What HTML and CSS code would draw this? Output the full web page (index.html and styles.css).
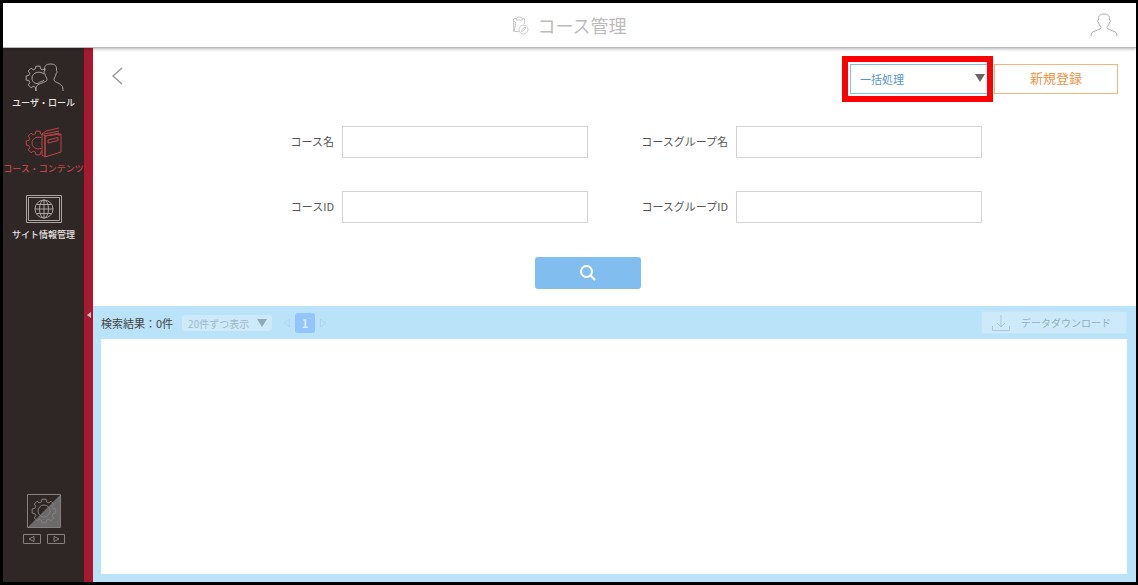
FILE: index.html
```html
<!DOCTYPE html>
<html lang="ja">
<head>
    <meta charset="UTF-8">
    <meta name="viewport" content="width=device-width, initial-scale=1.0">
    <title>コース管理</title>
    <link rel="stylesheet" href="styles.css">
</head>
<body>
    <header class="header">
        <h1 class="title">
            <svg class="title-icon" width="17" height="19" viewBox="0 0 17 19">
                <path d="M5 2.500H1.500V15.500H7M10 2.500h2.500V8M4.500 4V2.500L6 1h3l1.500 1.500V4z"/>
                <path d="M2 5v10l2-8z"/>
                <circle cx="11.500" cy="13.500" r="4.500"/>
                <path d="M9.500 15.500l.5-2 3-2.500 1 1-3 3z"/>
            </svg>
            コース管理
        </h1>
        <button type="button" class="user-button" aria-label="ユーザ">
            <svg width="28" height="24" viewBox="0 0 28 24">
                <path d="M1 23c0-3 1-4 4-5 4-1.500 6-2 6-3.500 0-1.500-2-2.500-2.500-5C7 9 7.500 7 8.500 7 8 3 10 1 14 1s6 2 5.500 6c1 0 1.500 2 0 2.500-.5 2.500-2.500 3.500-2.500 5 0 1.500 2 2 6 3.500 3 1 4 2 4 5"/>
            </svg>
        </button>
    </header>

    <div class="layout">
        <aside class="sidebar">
            <nav class="menu">
                <a href="#" class="menu-item">
                    <svg width="40" height="34" viewBox="0 0 40 34">
                        <g transform="translate(14 18)">
                            <path d="M6.900-6.900L6.900-9.800 4.800-8.200 2.500-9.200 2.100-11.800-2.100-11.800-2.500-9.200-4.800-8.200-6.900-9.800-9.800-6.900-8.200-4.800-9.200-2.500-11.800-2.100-11.800 2.100-9.200 2.500-8.200 4.800-9.800 6.900-6.900 9.800-4.800 8.200-2.500 9.200-2.100 13"/>
                            <path d="M6-4C1-8-6-5-6 0c0 4 3 6 6 5.500C2 3 5 4 6 2"/>
                        </g>
                        <path d="M12 31c0-6 1-6 6-8 2-1 5-1.500 5-3.500 0-2-2-3-2-6-1 0-1.500-2-.5-3C20 6 22 4 26.500 4s6.500 2 6 6.500c1 1 .5 3-.5 3 0 3-2 4-2 6 0 2 2 2.500 4 3.500 4 2 5 3 5 8"/>
                    </svg>
                    <span>ユーザ・ロール</span>
                </a>
                <a href="#" class="menu-item active">
                    <svg width="40" height="34" viewBox="0 0 40 34">
                        <g transform="translate(14 17)">
                            <path d="M4-8.500L2.500-9.200 2.100-11.800-2.100-11.800-2.500-9.200-4.800-8.200-6.900-9.800-9.800-6.900-8.200-4.800-9.200-2.500-11.800-2.100-11.800 2.100-9.200 2.500-8.200 4.800-9.800 6.900-6.900 9.800-4.800 8.200-2.500 9.200-2.100 11.800 2.100 11.800 2.500 9.200 4 8.500"/>
                            <path d="M3-5.500C-2-7-6-4-6 0s4 7 9 5.500"/>
                        </g>
                        <path d="M18 8l3 2v21l-3-2zM21 10l16-2v18l-16 5zM18 8l4-3 13-3M20 8l15-3M21 10l14-3v3M24 14l10-2.500v3L24 17z"/>
                    </svg>
                    <span>コース・コンテンツ</span>
                </a>
                <a href="#" class="menu-item">
                    <svg width="40" height="34" viewBox="0 0 40 34">
                        <path d="M2.500 3.500h35v27h-35zM4.500 5.500h31v23h-31z"/>
                        <circle cx="20" cy="17" r="9"/>
                        <ellipse cx="20" cy="17" rx="4.500" ry="9"/>
                        <path d="M20 8v18M11 17h18M13 12.500h14M13 21.500h14"/>
                    </svg>
                    <span>サイト情報管理</span>
                </a>
            </nav>

            <div class="settings">
                <button type="button" class="icon-button" aria-label="設定">
                    <svg width="34" height="34" viewBox="0 0 34 34">
                        <path class="half" d="M33 1v32H1z"/>
                        <path d="M.5.5h33v33H.5z"/>
                        <circle cx="17" cy="17" r="6"/>
                        <path transform="translate(17 17)" d="M9.200-2.500L11.800-2.100 11.800 2.100 9.200 2.500 8.200 4.800 9.800 6.900 6.900 9.800 4.800 8.200 2.500 9.200 2.100 11.800-2.100 11.800-2.500 9.200-4.800 8.200-6.900 9.800-9.800 6.900-8.200 4.800-9.200 2.500-11.800 2.100-11.800-2.100-9.200-2.500-8.200-4.800-9.800-6.900-6.900-9.800-4.800-8.200-2.500-9.200-2.100-11.800 2.100-11.800 2.500-9.200 4.800-8.200 6.900-9.800 9.800-6.900 8.200-4.800z"/>
                    </svg>
                </button>
                <div class="arrows">
                    <button type="button" class="icon-button" aria-label="前へ">
                        <svg width="18" height="10" viewBox="0 0 18 10"><path d="M.5.5h17v9H.5zM11 2.500v5L6 5z"/></svg>
                    </button>
                    <button type="button" class="icon-button" aria-label="次へ">
                        <svg width="18" height="10" viewBox="0 0 18 10"><path d="M.5.5h17v9H.5zM7 2.500v5L12 5z"/></svg>
                    </button>
                </div>
            </div>
        </aside>
        <button type="button" class="sidebar-toggle" aria-label="メニューを閉じる">
            <svg width="4" height="6" viewBox="0 0 4 6"><path d="M4 0v6L0 3z"/></svg>
        </button>

        <main class="content">
            <div class="toolbar">
                <a href="#" class="back" aria-label="戻る">
                    <svg width="11" height="18" viewBox="0 0 11 18"><path d="M10 1L1 9l9 8"/></svg>
                </a>
                <div class="batch">
                    <select class="batch-select" aria-label="一括処理">
                        <option>一括処理</option>
                    </select>
                    <span class="arrow-down"></span>
                    <span class="highlight"></span>
                </div>
                <button type="button" class="new-button">新規登録</button>
            </div>

            <form class="search-form">
                <div class="fields">
                    <label for="courseName">コース名</label>
                    <input type="text" id="courseName" name="courseName">
                    <label for="groupName">コースグループ名</label>
                    <input type="text" id="groupName" name="groupName">
                    <label for="courseId">コースID</label>
                    <input type="text" id="courseId" name="courseId">
                    <label for="groupId">コースグループID</label>
                    <input type="text" id="groupId" name="groupId">
                </div>
                <button type="submit" class="search-button" aria-label="検索">
                    <svg width="18" height="18" viewBox="0 0 18 18"><circle cx="7.500" cy="7.500" r="5.500"/><path d="M11.500 11.500L16 16"/></svg>
                </button>
            </form>

            <section class="results">
                <div class="results-bar">
                    <span class="count">検索結果：0件</span>
                    <div class="page-size">
                        <select aria-label="表示件数" disabled>
                            <option>20件ずつ表示</option>
                        </select>
                        <span class="arrow-down"></span>
                    </div>
                    <div class="pager">
                        <svg width="6" height="10" viewBox="0 0 6 10"><path d="M5.500 1v8L.5 5z"/></svg>
                        <button type="button" class="page">1</button>
                        <svg width="6" height="10" viewBox="0 0 6 10"><path d="M.5 1v8l5-4z"/></svg>
                    </div>
                    <button type="button" class="download" disabled>
                        <svg width="20" height="18" viewBox="0 0 20 18"><path d="M10 1v12M6 9l4 4 4-4M1.500 12v4.500h17V12"/></svg>
                        データダウンロード
                    </button>
                </div>
                <div class="results-list"></div>
            </section>
        </main>
    </div>
</body>
</html>
```
FILE: styles.css
```css
:root {
    --dark-color: #2f2725;
    --red-color: #a8192f;
    --blue-color: #82bdf0;
    --panel-color: #bae2f8;
    --orange-color: #eb9446;
}

* {
    margin: 0;
    padding: 0;
    box-sizing: border-box;
}

body {
    font-family: "Noto Sans CJK JP", sans-serif;
    font-size: 11px;
    color: #555;
    background-color: white;
    min-height: 100vh;
    border: 3px solid black;
    border-right-width: 2px;
    display: flex;
    flex-direction: column;
}

button,
input,
select {
    font-family: inherit;
    font-size: inherit;
}

button {
    cursor: pointer;
}

svg {
    display: block;
    fill: none;
    stroke: currentColor;
}

select {
    appearance: none;
    width: 100%;
    height: 100%;
    opacity: 1;
}

.header {
    position: relative;
    z-index: 1;
    height: 45px;
    display: grid;
    grid-template-columns: 1fr auto 1fr;
    align-items: center;
    background-color: white;
    border-bottom: 1px solid #bbb;
    box-shadow: 0 1px 3px rgba(0, 0, 0, 0.3);
}

.title {
    grid-column: 2;
    display: flex;
    align-items: center;
    gap: 8px;
    font-size: 18px;
    font-weight: 400;
    color: #bbb;
}

.title-icon {
    color: #ccc;
}

.user-button {
    justify-self: end;
    margin-right: 18px;
    border: none;
    background: none;
    color: #aaa;
}

.layout {
    flex: 1;
    display: flex;
}

.sidebar {
    width: 81px;
    padding: 12px 0 38px;
    display: flex;
    flex-direction: column;
    justify-content: space-between;
    align-items: center;
    background-color: var(--dark-color);
}

.menu {
    display: flex;
    flex-direction: column;
    gap: 17px;
}

.menu-item {
    display: flex;
    flex-direction: column;
    align-items: center;
    gap: 3px;
    font-size: 9px;
    font-weight: 500;
    line-height: 12px;
    white-space: nowrap;
    color: #e8e4e2;
    text-decoration: none;
}

.menu-item svg {
    color: #aaa5a3;
}

.menu-item.active,
.menu-item.active svg {
    color: #bd4549;
}

.settings {
    display: flex;
    flex-direction: column;
    align-items: center;
    gap: 6px;
}

.arrows {
    display: flex;
    gap: 6px;
}

.icon-button {
    border: none;
    background: none;
    color: #858180;
}

.half {
    fill: #6d6a6b;
    stroke: none;
}

.sidebar-toggle {
    width: 9px;
    border: none;
    background-color: var(--red-color);
    color: #e4b9bf;
    display: flex;
    align-items: center;
    justify-content: center;
}

.sidebar-toggle svg {
    fill: currentColor;
    stroke: none;
}

.content {
    flex: 1;
    display: flex;
    flex-direction: column;
}

.toolbar {
    display: flex;
    align-items: center;
    gap: 4px;
    padding: 16px 18px 0 19px;
}

.back {
    margin-right: auto;
    margin-bottom: 6px;
    color: #999;
}

.back svg {
    stroke-width: 1.5;
}

.batch {
    position: relative;
    width: 140px;
    height: 30px;
}

.batch-select {
    padding-left: 9px;
    border: 1px solid var(--blue-color);
    background-color: white;
    color: #5596d2;
}

.arrow-down {
    position: absolute;
    top: 10px;
    right: 5px;
    border: 5px solid transparent;
    border-top: 8px solid #666;
    border-bottom: none;
    pointer-events: none;
}

.highlight {
    position: absolute;
    inset: -8px -3px -8px -8px;
    border: 6px solid red;
    pointer-events: none;
}

.new-button {
    width: 124px;
    height: 30px;
    padding-bottom: 3px;
    border: 1px solid #f4b57c;
    background-color: white;
    color: var(--orange-color);
    font-size: 13px;
}

.search-form {
    display: flex;
    flex-direction: column;
    align-items: center;
    gap: 34px;
    padding: 32px 53px 17px 0;
}

.fields {
    width: 100%;
    max-width: 788px;
    display: grid;
    grid-template-columns: 148px 1fr 148px 1fr;
    align-items: center;
    row-gap: 33px;
}

.fields label {
    padding: 0 8px 3px 0;
    text-align: right;
}

.fields input {
    width: 100%;
    height: 32px;
    padding: 0 8px;
    border: 1px solid #d4d4d4;
}

.search-button {
    width: 106px;
    height: 32px;
    border: none;
    border-radius: 3px;
    background-color: var(--blue-color);
    color: white;
    display: flex;
    align-items: center;
    justify-content: center;
}

.search-button svg {
    stroke-width: 2;
}

.results {
    flex: 1;
    display: flex;
    flex-direction: column;
    padding: 0 9px 8px 8px;
    background-color: var(--panel-color);
}

.results-bar {
    height: 33px;
    display: flex;
    align-items: center;
}

.count {
    color: #444;
}

.page-size {
    position: relative;
    width: 90px;
    height: 16px;
    margin-left: 9px;
}

.page-size select {
    padding-left: 6px;
    border: none;
    border-radius: 3px;
    background-color: #cdeafb;
    color: #9fb9c8;
    font-size: 10px;
}

.page-size .arrow-down {
    top: 4px;
    border-top-color: #8fabba;
}

.pager {
    display: flex;
    align-items: center;
    gap: 5px;
    margin-left: 12px;
    color: #abd6ef;
}

.page {
    width: 20px;
    height: 20px;
    border: none;
    border-radius: 3px;
    background-color: #94c5fa;
    color: #d8ecfd;
    font-weight: bold;
}

.download {
    width: 146px;
    height: 23px;
    margin-left: auto;
    padding-left: 9px;
    border: 1px solid #c3e4f6;
    background-color: #cdeafb;
    color: #93aebd;
    font-size: 10px;
    display: flex;
    align-items: center;
    gap: 10px;
}

.download svg {
    color: #a9c7d8;
}

.results-list {
    flex: 1;
    background-color: white;
}
```
